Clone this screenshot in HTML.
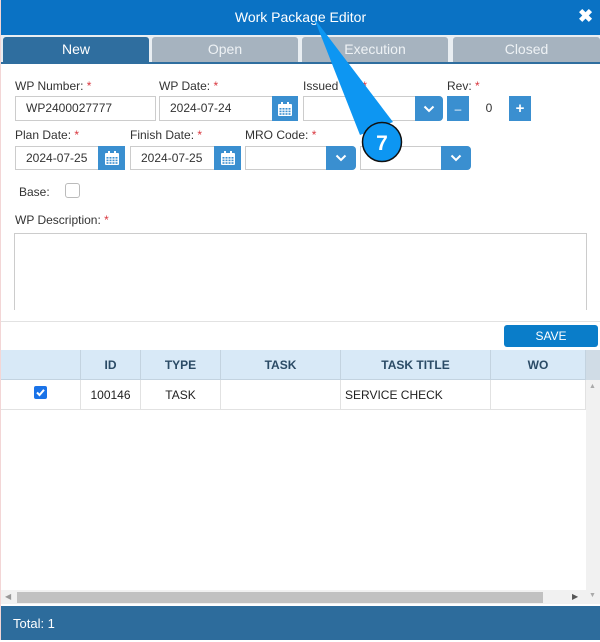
<!DOCTYPE html>
<html><head><style>
*{box-sizing:border-box;margin:0;padding:0}
body{width:600px;height:640px;position:relative;background:#fff;font-family:"Liberation Sans",sans-serif;overflow:hidden;font-size:12px;color:#333}
.a{position:absolute}
.lbl{position:absolute;font-size:12px;color:#333}
.lbl b{color:#d9363e;font-weight:normal}
.inp{position:absolute;border:1px solid #ccc;background:#fff;height:24px;font-size:12px;line-height:22px;padding-left:10px;color:#333}
.btn{position:absolute;background:#3a8fd0;height:24px;color:#fff;text-align:center;line-height:24px;display:flex;align-items:center;justify-content:center}
.tab{position:absolute;top:37px;height:25px;background:#a6b3bf;color:#eef2f5;font-size:14px;text-align:center;line-height:25px;border-radius:3px 3px 0 0}
.th{position:absolute;top:350px;height:30px;line-height:30px;text-align:center;color:#2b4b66;font-weight:bold;font-size:12px;border-right:1px solid #c3d3e0}
.td{position:absolute;top:380px;height:30px;line-height:30px;text-align:center;font-size:12px;color:#222;border-right:1px solid #e2e2e2;border-bottom:1px solid #e2e2e2}
</style></head><body>
<svg width="0" height="0" style="position:absolute">
<defs>
<symbol id="cal" viewBox="0 0 16 16"><rect x="1" y="3" width="14" height="12" rx="1" fill="#fff"/><rect x="4" y="1" width="2" height="4" fill="#fff"/><rect x="10" y="1" width="2" height="4" fill="#fff"/><g fill="#3a8fd0"><rect x="2.5" y="7" width="2" height="1.6"/><rect x="5.5" y="7" width="2" height="1.6"/><rect x="8.5" y="7" width="2" height="1.6"/><rect x="11.5" y="7" width="2" height="1.6"/><rect x="2.5" y="9.6" width="2" height="1.6"/><rect x="5.5" y="9.6" width="2" height="1.6"/><rect x="8.5" y="9.6" width="2" height="1.6"/><rect x="11.5" y="9.6" width="2" height="1.6"/><rect x="2.5" y="12.2" width="2" height="1.6"/><rect x="5.5" y="12.2" width="2" height="1.6"/><rect x="8.5" y="12.2" width="2" height="1.6"/><rect x="11.5" y="12.2" width="2" height="1.6"/></g></symbol>
<symbol id="chev" viewBox="0 0 12 8"><path d="M1.5 1.5 L6 6 L10.5 1.5" fill="none" stroke="#fff" stroke-width="2"/></symbol>
</defs></svg>
<div class="a" style="left:0;top:0;width:1px;height:640px;background:#f3d6d6"></div>
<div class="a" style="left:1px;top:0;width:599px;height:35px;background:#0a72c4;color:#fff;font-size:14px;text-align:center;line-height:35px">Work Package Editor</div>
<div class="a" style="left:578px;top:6px;color:#fff;font-size:18px;font-weight:bold">✖</div>
<div class="a" style="left:1px;top:35px;width:599px;height:29px;background:#e9eef2"></div>
<div class="tab" style="left:3px;width:146px;background:#2f6e9f;color:#fff">New</div>
<div class="tab" style="left:152px;width:146px">Open</div>
<div class="tab" style="left:302px;width:146px">Execution</div>
<div class="tab" style="left:453px;width:147px">Closed</div>
<div class="a" style="left:1px;top:62px;width:599px;height:2px;background:#2f6e9f"></div>

<div class="lbl" style="left:15px;top:79px">WP Number: <b>*</b></div>
<div class="lbl" style="left:159px;top:79px">WP Date: <b>*</b></div>
<div class="lbl" style="left:303px;top:79px">Issued By: <b>*</b></div>
<div class="lbl" style="left:447px;top:79px">Rev: <b>*</b></div>
<div class="inp" style="left:15px;top:96px;width:141px;height:25px">WP2400027777</div>
<div class="inp" style="left:159px;top:96px;width:114px;height:25px">2024-07-24</div>
<div class="btn" style="left:272px;top:96px;width:26px;height:25px"><svg width="16" height="18"><use href="#cal"/></svg></div>
<div class="inp" style="left:303px;top:96px;width:140px;height:25px;border-radius:0 4px 4px 0"></div>
<div class="btn" style="left:415px;top:96px;width:28px;height:25px;border-radius:0 4px 4px 0"><svg width="12" height="8"><use href="#chev"/></svg></div>
<div class="btn" style="left:447px;top:96px;width:22px;height:25px">–</div>
<div class="a" style="left:469px;top:96px;width:40px;height:25px;text-align:center;line-height:25px">0</div>
<div class="btn" style="left:509px;top:96px;width:22px;height:25px;font-size:15px;font-weight:bold">+</div>

<div class="lbl" style="left:15px;top:128px">Plan Date: <b>*</b></div>
<div class="lbl" style="left:130px;top:128px">Finish Date: <b>*</b></div>
<div class="lbl" style="left:245px;top:128px">MRO Code: <b>*</b></div>
<div class="inp" style="left:15px;top:146px;width:86px;height:24px">2024-07-25</div>
<div class="btn" style="left:98px;top:146px;width:27px"><svg width="16" height="18"><use href="#cal"/></svg></div>
<div class="inp" style="left:130px;top:146px;width:86px;height:24px">2024-07-25</div>
<div class="btn" style="left:214px;top:146px;width:27px"><svg width="16" height="18"><use href="#cal"/></svg></div>
<div class="inp" style="left:245px;top:146px;width:111px;border-radius:0 4px 4px 0"></div>
<div class="btn" style="left:326px;top:146px;width:30px;border-radius:0 4px 4px 0"><svg width="12" height="8"><use href="#chev"/></svg></div>
<div class="inp" style="left:360px;top:146px;width:111px;border-radius:0 4px 4px 0"></div>
<div class="btn" style="left:441px;top:146px;width:30px;border-radius:0 4px 4px 0"><svg width="12" height="8"><use href="#chev"/></svg></div>

<div class="lbl" style="left:19px;top:185px">Base:</div>
<div class="a" style="left:65px;top:183px;width:15px;height:15px;border:1px solid #bbb;border-radius:3px"></div>

<div class="lbl" style="left:15px;top:213px">WP Description: <b>*</b></div>
<div class="a" style="left:14px;top:233px;width:573px;height:77px;border:1px solid #ccc;border-bottom:none"></div>
<div class="a" style="left:1px;top:321px;width:599px;height:1px;background:#e2e2e2"></div>
<div class="btn" style="left:504px;top:325px;width:94px;height:22px;border-radius:3px;background:#0a7dc9">SAVE</div>

<div class="a" style="left:1px;top:350px;width:599px;height:30px;background:#d8e9f7;border-bottom:1px solid #c3d3e0"></div>
<div class="th" style="left:1px;width:80px"></div>
<div class="th" style="left:81px;width:60px">ID</div>
<div class="th" style="left:141px;width:80px">TYPE</div>
<div class="th" style="left:221px;width:120px">TASK</div>
<div class="th" style="left:341px;width:150px">TASK TITLE</div>
<div class="th" style="left:491px;width:95px">WO</div>
<div class="a" style="left:586px;top:350px;width:14px;height:30px;background:#d0dce6"></div>
<div class="td" style="left:1px;width:80px"></div>
<div class="a" style="left:34px;top:386px;width:13px;height:13px;background:#1a73e8;border-radius:2px"><svg width="13" height="13"><path d="M3 6.5 L5.5 9 L10 3.8" fill="none" stroke="#fff" stroke-width="2"/></svg></div>
<div class="td" style="left:81px;width:60px">100146</div>
<div class="td" style="left:141px;width:80px">TASK</div>
<div class="td" style="left:221px;width:120px"></div>
<div class="td" style="left:341px;width:150px;text-align:left;padding-left:4px">SERVICE CHECK</div>
<div class="td" style="left:491px;width:95px"></div>
<div class="a" style="left:586px;top:380px;width:14px;height:224px;background:#f1f1f1"></div>
<div class="a" style="left:589px;top:383px;color:#aaa;font-size:7px">▲</div>
<div class="a" style="left:1px;top:590px;width:585px;height:14px;background:#f1f1f1"></div>
<div class="a" style="left:17px;top:592px;width:526px;height:11px;background:#c1c1c1"></div>
<div class="a" style="left:5px;top:592px;color:#999;font-size:8px">◀</div>
<div class="a" style="left:572px;top:592px;color:#555;font-size:8px">▶</div>
<div class="a" style="left:589px;top:592px;color:#aaa;font-size:7px">▼</div>
<div class="a" style="left:1px;top:606px;width:599px;height:34px;background:#2d6c9c;color:#fff;font-size:13px;line-height:36px;padding-left:12px">Total: 1</div>

<svg class="a" style="left:0;top:0" width="600" height="640">
<polygon points="314,18 360,135 393,122" fill="#0d96f2"/>
<circle cx="382" cy="142" r="19.5" fill="#0d96f2" stroke="#111" stroke-width="1.5"/>
<text x="382" y="150" text-anchor="middle" fill="#fff" font-family="Liberation Sans" font-weight="bold" font-size="21">7</text>
</svg>
</body></html>
